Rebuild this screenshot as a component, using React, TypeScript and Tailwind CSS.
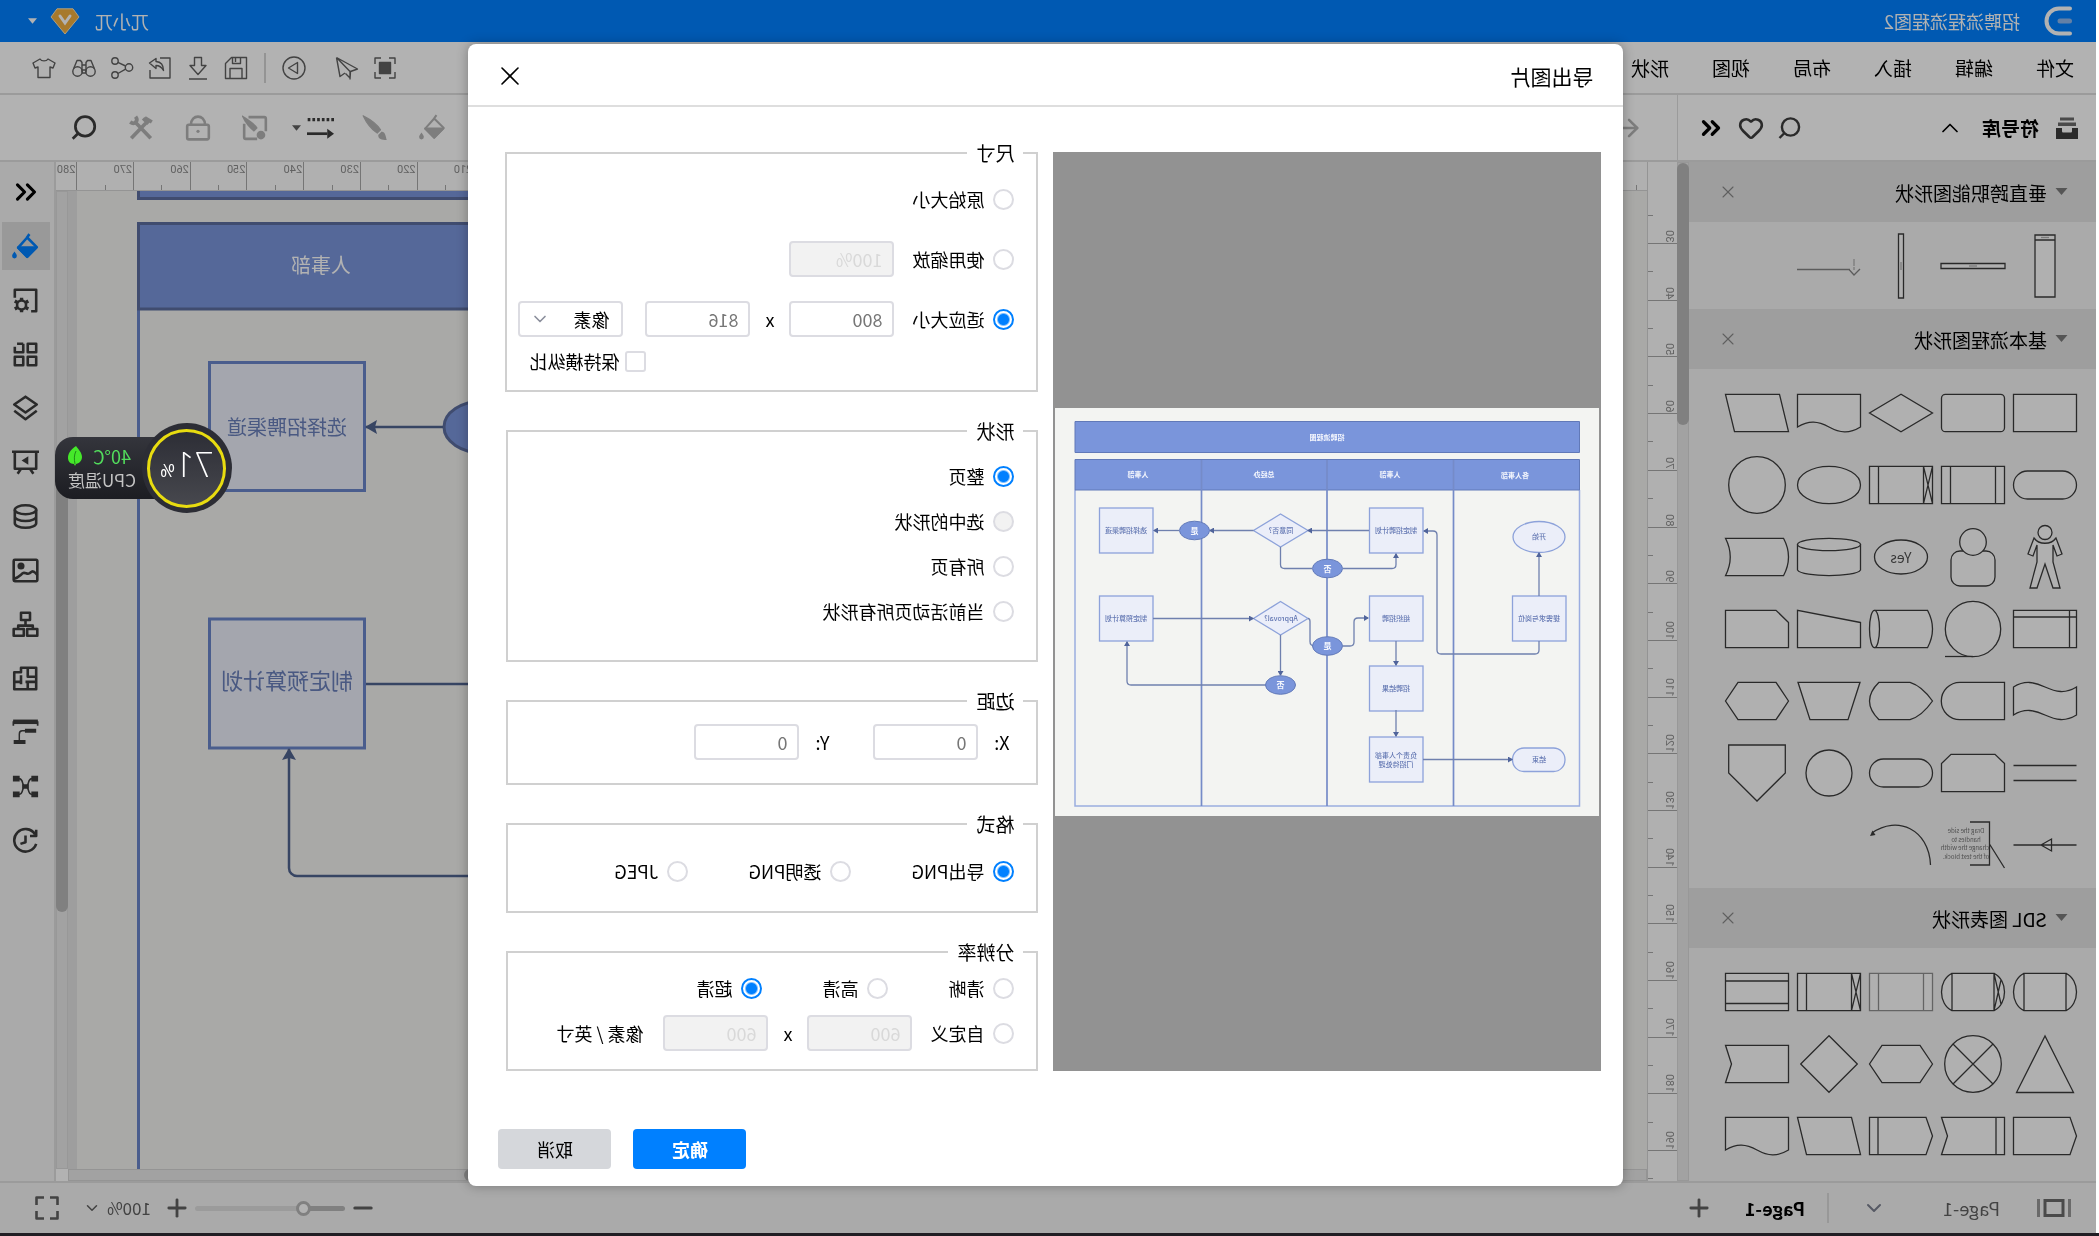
import React from "react";
import type { ReactNode } from "react";
import { ArrowLeft, ChevronDown, ChevronUp, ChevronsLeft, Heart, Minus, Plus, X } from "lucide-react";

/* ---------- Icons ---------- */

interface IconProps {
  children: ReactNode;
  className?: string;
  width?: number;
}

function Icon({ children, className = "size-6", width = 1.4 }: IconProps) {
  return (
    <svg viewBox="0 0 24 24" className={className} fill="none" stroke="currentColor" strokeWidth={width} strokeLinejoin="round" aria-hidden="true">
      {children}
    </svg>
  );
}

const searchPath = (
  <>
    <circle cx="11.5" cy="11" r="8.6" />
    <path d="M18 17.5l4.5 4.5" />
  </>
);

const bucketPath = (
  <>
    <path d="M8.500 1L11 4.500M10.500 4l-8.500 8.500 8.500 8.500 8-8z" />
    <path d="M2.500 13h16l-8 8.200z" fill="currentColor" />
    <path d="M21.800 16.500c1.400 2 2.100 2.900 2.100 4a2.100 2.100 0 0 1-4.200 0c0-1.100.7-2 2.100-4z" fill="currentColor" stroke="none" />
  </>
);

const menuIcons: { label: string; gap: string; icon: ReactNode }[] = [
  {
    label: "聚焦",
    gap: "mr-[14px]",
    icon: (
      <>
        <rect x="6.5" y="6.5" width="11" height="11" fill="currentColor" />
        <path d="M2 8V2h6M16 2h6v6M22 16v6h-6M8 22H2v-6" />
      </>
    ),
  },
  { label: "发送", gap: "mr-[29px]", icon: <path d="M22.5 1.5L1.500 13l7 2.500.500 7.500M22.5 1.5L19 20.500l-5-3.500M9 23.500V15.500L22.500 1.500M9 22l4.500-4.500" /> },
  {
    label: "播放",
    gap: "mr-4",
    icon: (
      <>
        <circle cx="12" cy="12" r="11" />
        <path d="M8.5 6.5L17.5 12l-9 5.5z" />
      </>
    ),
  },
  { label: "sep", gap: "mr-4", icon: null },
  { label: "保存", gap: "mr-[14px]", icon: <path d="M1.5 1.5h15l6 6v15h-21zM6 22.5v-10h12v10M7.5 1.5v6h8v-6M12.5 2v4" /> },
  { label: "下载", gap: "mr-[14px]", icon: <path d="M8.5 1.5h7v8H20l-8 9-8-9h4.500zM3 23h18" /> },
  { label: "导出", gap: "mr-[14px]", icon: <path d="M12 2H2v20h20v-8M22.500 7L16 2.500V5.500c-6 .5-7.500 4-7.500 9 2-3.500 4-5 7.500-5v3z" /> },
  {
    label: "分享",
    gap: "mr-[14px]",
    icon: (
      <>
        <circle cx="5" cy="11.500" r="3.700" />
        <circle cx="19" cy="5" r="3.200" />
        <circle cx="19" cy="19" r="3.200" />
        <path d="M8.400 10l7.700-3.600M8.400 13.200l7.700 4.300" />
      </>
    ),
  },
  {
    label: "查找",
    gap: "mr-4",
    icon: (
      <>
        <circle cx="5.500" cy="15.500" r="4.700" />
        <circle cx="18.500" cy="15.500" r="4.700" />
        <path d="M1.500 13L5 4.500h3.500L10 6.500v10M22.500 13L19 4.500h-3.500L14 6.500v10M10 9h4M10 14h4M10 17h4" />
      </>
    ),
  },
  { label: "主题", gap: "", icon: <path d="M8 3L1 7l2 5 3-1v10.500h12V11l3 1 2-5-7-4c-1.500 2.500-6.500 2.500-8 0z" /> },
];

const sideIcons: { label: string; icon: ReactNode }[] = [
  { label: "填充", icon: bucketPath },
  {
    label: "页面设置",
    icon: (
      <>
        <path d="M7 21.500H2.500v-19h19v7" />
        <circle cx="15.500" cy="16" r="4" />
        <path d="M15.500 9.500v2.500M15.500 20v2.500M9.500 12.500l2.300 1.300M19.200 18.200l2.300 1.300M9.500 19.500l2.300-1.300M19.200 13.800l2.300-1.300" strokeWidth="3" />
      </>
    ),
  },
  { label: "网格", icon: <path d="M2.500 2.500H10V10H2.500zM14 2.500h5.500M21.500 5v5H14V2.500M2.500 14H10v7.500H2.500zM14 14h7.500v7.500H14z" /> },
  { label: "图层", icon: <path d="M12 1.500l10 7-10 7-10-7zM2 14l10 7.500L22 14" /> },
  {
    label: "演示",
    icon: (
      <>
        <path d="M0 2.500h24M2.500 2.500v15h19v-15M8 17.500L5 22M16 17.500l3 4.500" />
        <path d="M9.500 6.500v7.500l6-3.700z" fill="currentColor" stroke="none" />
      </>
    ),
  },
  {
    label: "数据",
    icon: (
      <>
        <ellipse cx="12" cy="6" rx="9.500" ry="4" />
        <path d="M2.500 6v12c0 2 4 4 9.500 4s9.500-2 9.500-4V6M2.500 12c0 2 4 4 9.500 4s9.500-2 9.500-4" />
      </>
    ),
  },
  {
    label: "图片",
    icon: (
      <>
        <rect x="1.500" y="2.500" width="21" height="19" rx="1" />
        <circle cx="16" cy="8" r="2" fill="currentColor" />
        <path d="M1.500 16c4-5 5-3 7-1.500s4-1.500 6 0 4 4 8 5" />
      </>
    ),
  },
  { label: "组织结构", icon: <path d="M8 1.500h8v6.500H8zM12 8v5M5.500 15.500V13h13v2.500M1.500 16h9v6h-9zM13.500 16h9v6h-9z" /> },
  { label: "平面图", icon: <path d="M2.500 2.500H16v4h6v15H2.500zM10 2.500v8H2.500M2.500 15H10v6M16 9v6h6M10 15h2M16 15v2" /> },
  {
    label: "时间线",
    icon: (
      <>
        <path d="M1 2.500h22" strokeWidth="4" />
        <path d="M1.200 2v4M22.800 2v4" strokeWidth="1.500" />
        <path d="M2.500 10.500h10M12 20.500h10.500" strokeWidth="3.500" />
        <path d="M12 10.500h3c2 0 2.500 1 2.500 3v6" strokeWidth="1.300" />
      </>
    ),
  },
  {
    label: "思维导图",
    icon: (
      <>
        <path d="M.8 5h6M17.200 5h6M.8 19h6M17.200 19h6" strokeWidth="5" />
        <path d="M9 12h6" strokeWidth="4" />
        <path d="M6 5c5 0 2 7 6 7s1-7 6-7M6 19c5 0 2-7 6-7s1 7 6 7" strokeWidth="1.400" />
      </>
    ),
  },
  {
    label: "历史",
    icon: (
      <>
        <path d="M3.500 6.500A10 10 0 1 1 2.500 15M2.500 2.500v5.500H8" />
        <path d="M12 7.500v6l4.500 1.500" />
      </>
    ),
  },
];

/* ---------- Symbol library ---------- */

const docPath = "M-31.500-18.700H31.500V14C20 7 11 8 0 14S-20 21-31.500 14Z";
const parallelogram = "M-22.500-18.700H31.500L22.500 18.700H-31.500Z";
const box = "M-31.500-18.700H31.500V18.700H-31.500Z";
const hexagon = "M-31.500 0L-19-18.700H19L31.500 0 19 18.700H-19Z";
const stadium = "M-17.500-14h35a14 14 0 0 1 0 28h-35a14 14 0 0 1 0-28Z";
const crossBox = box + "M-22.500-18.700V18.700M22.500-18.700V18.700M-31.500-18.700L-22.500 18.700M-22.500-18.700L-31.500 18.700";
const capsule = "M-21-18.700H21V18.700H-21ZM-21-18.700C-35-12-35 12-21 18.700M21-18.700C35-12 35 12 21 18.700";

function Shape({ children, muted }: { children: ReactNode; muted?: boolean }) {
  return (
    <svg viewBox="-36 -36 72 72" className={muted ? "size-[72px] text-[#909090]" : "size-[72px] text-[#3c3c3c]"} fill="#fdfdfd" stroke="currentColor" strokeWidth="1.300">
      {children}
    </svg>
  );
}

const laneShapes = [
  <g key="a">
    <path d="M-10-31H10V31H-10ZM-10-26H10" />
    <path d="M-4-28.500H4" opacity=".4" />
  </g>,
  <g key="b">
    <path d="M-32-2.500H32V2.500H-32Z" />
    <path d="M-4 0H4" opacity=".4" />
  </g>,
  <g key="c">
    <path d="M-2.500-32H2.500V32H-2.500Z" />
    <path d="M0-4V4" opacity=".4" />
  </g>,
  <g key="d" fill="none" opacity=".6">
    <path d="M-21 3.500H32M-31 3L-25 9-20 3.500" />
    <path d="M-25-7V4" strokeDasharray="7 1" strokeWidth="2" opacity=".4" />
  </g>,
];

const basicShapes = [
  <path key="1" d={box} />,
  <rect key="2" x="-31.500" y="-18.700" width="63" height="37.400" rx="4" />,
  <path key="3" d="M0-18.700L31.500 0 0 18.700-31.500 0Z" />,
  <path key="4" d={docPath} />,
  <path key="5" d={parallelogram} />,
  <path key="6" d={stadium} />,
  <path key="7" d={box + "M-22.500-18.700V18.700M22.500-18.700V18.700"} />,
  <path key="8" d={crossBox} />,
  <ellipse key="9" rx="31.500" ry="18.700" />,
  <circle key="10" r="28.300" />,
  <g key="11">
    <path d="M-11-19C-6-12 6-12 11-19L17-3 12-1 8-12V5L15 31H8L0 7-8 31H-15L-8 5V-12L-12-1-17-3Z" />
    <circle cy="-24.500" r="7" />
  </g>,
  <g key="12">
    <rect x="-22" y="-6" width="44" height="35" rx="9" />
    <circle cy="-15" r="13.300" />
  </g>,
  <g key="13">
    <ellipse rx="26.500" ry="17" />
    <text y="6" textAnchor="middle" fontSize="14" fill="#505050" stroke="none">Yes</text>
  </g>,
  <g key="14">
    <path d="M-31.500-13V13C-27 20.500 27 20.500 31.500 13V-13" />
    <ellipse cy="-12.500" rx="31.500" ry="6.200" />
  </g>,
  <path key="15" d="M-26.500-18.700H31.500Q22 0 31.500 18.700H-26.500Q-36.500 0-26.500-18.700Z" />,
  <path key="16" d={box + "M-24.500-18.700V18.700M-31.500-12H31.500"} />,
  <g key="17">
    <circle r="27.700" />
    <path d="M0 27.500H28" />
  </g>,
  <g key="18">
    <path d="M26.500-18.700H-26.500Q-36.500 0-26.500 18.700H26.500" />
    <ellipse cx="26.500" rx="5" ry="18.700" />
  </g>,
  <path key="19" d="M-31.500-6.500L31.500-18.700V18.700H-31.500Z" />,
  <path key="20" d="M-31.500-6.500L-19-18.700H31.500V18.700H-31.500Z" />,
  <path key="21" d="M-31.500-14C-20-7-11-9 0-14S20-21 31.500-14V14C20 7 11 9 0 14S-20 21-31.500 14Z" />,
  <path key="22" d="M-31.500-18.700H13A18.700 18.700 0 0 1 13 18.700H-31.500Z" />,
  <path key="23" d="M-31.500 0Q-21-15-9-18.700H22Q41 0 22 18.700H-9Q-21 15-31.500 0Z" />,
  <path key="24" d="M-31-18.700H31L19 18.700H-19Z" />,
  <path key="25" d={hexagon} />,
  <path key="26" d="M-31.500-7.500H31.500M-31.500 7.500H31.500" />,
  <path key="27" d="M-31.500-9.500L-22-18.700H22L31.500-9.500V18.700H-31.500Z" />,
  <path key="28" d={stadium} />,
  <circle key="29" r="23" />,
  <path key="30" d="M-28.300-28H28.300V0L0 28-28.300 0Z" />,
  <path key="31" d="M-31.500 0H31.500M-6.500-6V6L4 0Z" />,
  <g key="32">
    <path d="M3-23H-16.500V20H3M-16.500-1L-31.500 23" fill="none" />
    <g fontSize="6" textAnchor="middle" fill="#707070" stroke="none">
      <text x="7" y="-12">Drag the side</text>
      <text x="7" y="-3">handles to</text>
      <text x="8" y="5">change the width</text>
      <text x="7" y="14">of the text block.</text>
    </g>
  </g>,
  <g key="33">
    <path d="M-29.500 20C-28-16 4-30 29-12" fill="none" />
    <path d="M31-9l-5.500-1L28.500-14.500z" fill="currentColor" stroke="none" />
  </g>,
];

const sdlShapes = [
  <path key="1" d={capsule} />,
  <path key="2" d={capsule + "M-28-12L-21 18.700M-28 12L-21-18.700"} />,
  <path key="3" d={box + "M-22.500-18.700V18.700M22.500-18.700V18.700"} />,
  <path key="4" d={crossBox} />,
  <path key="5" d={box + "M-31.500-11H31.500M-31.500 11.500H31.500"} />,
  <path key="6" d="M0-28L28.500 28.500H-28.500Z" />,
  <g key="7">
    <circle r="28.300" />
    <path d="M-20-20L20 20M20-20L-20 20" />
  </g>,
  <path key="8" d={hexagon} />,
  <path key="9" d="M0-28.300L28.300 0 0 28.300-28.300 0Z" />,
  <path key="10" d="M-31.500-18.700H31.500L25.500 0 31.500 18.700H-31.500Z" />,
  <path key="11" d="M-31.500 0L-25-18.700H31.500V18.700H-25Z" />,
  <path key="12" d="M-31.500-18.700H31.500L25.500 0 31.500 18.700H-31.500ZM-23-18.700V18.700" />,
  <path key="13" d="M-31.500 0L-25-18.700H31.500V18.700H-25ZM23-18.700V18.700" />,
  <path key="14" d={parallelogram} />,
  <path key="15" d={docPath} />,
];

function ShapeSection({ title, shapes }: { title: string; shapes: ReactNode[] }) {
  return (
    <section>
      <div className="flex h-[60px] items-center bg-[#e3e3e3] pr-[29px] pl-7">
        <svg viewBox="0 0 12 8" className="mr-2 h-2 w-[13px] fill-[#7a7a7a]" aria-hidden="true">
          <path d="M0 0h12L6 7z" />
        </svg>
        <h3 className="flex-1 pt-[2px] text-[19px] leading-6">{title}</h3>
        <button aria-label={"关闭" + title}>
          <X className="size-5 text-[#888]" strokeWidth={1.3} />
        </button>
      </div>
      <div className="flex flex-wrap pt-2 pr-[32px] pb-[7px] pl-[15px]">
        {shapes.map((shape, i) => (
          <Shape key={i} muted={title === "SDL 图表形状" && i === 2}>{shape}</Shape>
        ))}
      </div>
    </section>
  );
}

/* ---------- Rulers ---------- */

function HorizontalRuler() {
  const marks = Array.from({ length: 56 }, (_, i) => 5 + i * 5);
  return (
    <svg className="h-[29px] w-full border-b border-[#d4d4d4] bg-[#fcfcfc] font-[Roboto,sans-serif] text-[#a8a8a8]" aria-hidden="true">
      {marks.map((v) => (
        <g key={v}>
          <path d={`M${Math.round(v * 5.67 - 18) + 0.5} ${v % 10 ? 23 : 0}V29`} stroke="currentColor" />
          {v % 10 === 0 && (
            <text x={v * 5.67 - 16} y="11" fontSize="11" fill="#8c8c8c">{v}</text>
          )}
        </g>
      ))}
    </svg>
  );
}

function VerticalRuler() {
  const marks = Array.from({ length: 35 }, (_, i) => 25 + i * 5);
  return (
    <svg className="h-full w-[30px] shrink-0 border-r border-[#d4d4d4] bg-[#fcfcfc] font-[Roboto,sans-serif] text-[#a8a8a8]" aria-hidden="true">
      {marks.map((v) => {
        const y = Math.round(v * 5.669 - 89) + 0.5;
        return (
          <g key={v}>
            <path d={`M${v % 10 ? 24 : 0} ${y}H30`} stroke="currentColor" />
            {v % 10 === 0 && (
              <text transform={`translate(11 ${y - 1}) rotate(-90)`} fontSize="11" fill="#8c8c8c">{v}</text>
            )}
          </g>
        );
      })}
    </svg>
  );
}

/* ---------- Drawing on the page ---------- */

function CanvasDrawing() {
  return (
    <svg viewBox="-9 0 460 978" className="absolute top-0 right-0 h-[978px] w-[460px]" fill="none">
      <defs>
        <marker id="head" viewBox="0 0 12 14" refX="11" refY="7" markerWidth="12" markerHeight="14" markerUnits="userSpaceOnUse" orient="auto-start-reverse">
          <path d="M0 0L12 7 0 14 2 7z" fill="#50638f" />
        </marker>
      </defs>
      <g stroke="#5b719f" strokeWidth="3">
        <path d="M-20-5H389.500V7.500H-20z" fill="#7a95db" stroke="#5c6ea0" />
        <path d="M389.500 119V990" stroke="#6a86cb" />
        <path d="M-20 32.500H389.500V118H-20z" fill="#7a95db" stroke="#5c6ea0" />
        <path d="M163.500 171.500h155v128h-155zM163.500 428h155v129h-155z" fill="#ebeef9" stroke="#6a86cb" />
        <ellipse cx="45" cy="236" rx="39" ry="26" fill="#7a95db" stroke="#5c6ea0" />
      </g>
      <g stroke="#50638f" strokeWidth="2.500">
        <path d="M85 236H162" markerEnd="url(#head)" />
        <path d="M-9 493H162" />
        <path d="M-9 685H231a8 8 0 0 0 8-8V558" markerEnd="url(#head)" />
      </g>
      <g textAnchor="middle" fontSize="20">
        <text x="207" y="82" fill="#fff">人事部</text>
        <text x="241" y="244" fill="#6a80bb">选择招聘渠道</text>
        <text x="241" y="498" fontSize="22" fill="#6a80bb">制定预算计划</text>
      </g>
    </svg>
  );
}

/* ---------- Export preview ---------- */

function PreviewDrawing() {
  const boxes = [
    [176, 100], [446, 100], [176, 188], [446, 188], [33, 188], [176, 258], [176, 329],
  ];
  const lines = [
    "M230 122.500H291", "M345.500 122.500H389", "M420 122.500H445", "M256 160.500H207q-4 0-4-4V146",
    "M60 233v9q0 4 4 4h94q4 0 4-4V127q0-4 4-4H175", "M60 188V145", "M446 210.500H346", "M203 233V257",
    "M203 302V328", "M176 351.500H87", "M256 238h-7q-4 0-4-4v-20q0-4-4-4H231", "M318.500 227V267",
    "M333 277H468q4 0 4-4V234",
  ];
  const ovals: [number, number, string][] = [
    [404.5, 122.5, "是"], [271.5, 160.5, "否"], [271.5, 238, "是"], [318.5, 277, "否"],
  ];
  const labels: [number, number, string][] = [
    [60, 131, "开始"], [203, 125, "制定招聘计划"], [318, 125, "同意否?"], [473, 125, "选择招聘渠道"],
    [60, 213, "提需求与岗位"], [203, 213, "组织招聘"], [318, 213, "Approval?"], [473, 213, "制定预算计划"],
    [203, 283, "招聘结果"], [203, 350, "负责个人事部"], [203, 359, "门招待处理"], [60, 354, "结束"],
  ];
  return (
    <svg viewBox="0 0 544 408" className="w-full bg-[#f3f4f2]" fill="none">
      <defs>
        <marker id="tip" viewBox="0 0 5 6" refX="4" refY="3" markerWidth="5" markerHeight="6" markerUnits="userSpaceOnUse" orient="auto">
          <path d="M0 0L5 3 0 6z" fill="#50649b" />
        </marker>
      </defs>
      <g className="blur-[0.5px]">
        <path d="M19.500 82V398H524V82" stroke="#9bade0" strokeWidth="1.500" />
        <path d="M19.500 13.500H524V44.500H19.500zM19.500 51.500H524V82H19.500z" fill="#7a95db" stroke="#6179b8" />
        <path d="M145.500 52V398M272 52V398M397.500 52V398" stroke="#758bc8" strokeWidth="1.700" />
        <g fill="#ebeef9" stroke="#8da2da" strokeWidth="1.300">
          {boxes.map(([x, y]) => (
            <rect key={`${x}-${y}`} x={x} y={y} width="53.500" height="45" />
          ))}
          <path d="M318.500 106L345.500 122.500 318.500 139 291 122.500zM318.500 193.500L345.500 210.500 318.500 227 291 210.500z" />
          <ellipse cx="60" cy="129" rx="26" ry="15.500" />
          <rect x="34" y="340" width="52.500" height="23.500" rx="11.500" />
        </g>
        <g stroke="#6f80ae" strokeWidth="1.300">
          <path d="M318.500 139v17.500q0 4-4 4H287M291 210.500q-2 0-2 3v20q0 4-4 4.500" />
          {lines.map((d) => (
            <path key={d} d={d} markerEnd="url(#tip)" />
          ))}
        </g>
        {ovals.map(([x, y, t]) => (
          <g key={`${x}-${y}`}>
            <ellipse cx={x} cy={y} rx="15" ry="9.300" fill="#7a95db" stroke="#6179b8" />
            <text x={x} y={y + 3} textAnchor="middle" fontSize="8" fontWeight="700" fill="#f4f6fd">{t}</text>
          </g>
        ))}
        <g textAnchor="middle" fontSize="7" fontWeight="500" fill="#6377b3">
          {labels.map(([x, y, t]) => (
            <text key={`${x}-${y}`} x={x} y={y}>{t}</text>
          ))}
        </g>
        <g textAnchor="middle" fontSize="7" fontWeight="700" fill="#f4f6fd">
          <text x="272" y="32">招聘流程图</text>
          <text x="84" y="70">各人事部</text>
          <text x="209" y="69">人事部</text>
          <text x="335" y="69">总经办</text>
          <text x="461" y="69">人事部</text>
        </g>
      </g>
    </svg>
  );
}

/* ---------- Form parts ---------- */

interface RadioProps {
  name: string;
  label: string;
  checked?: boolean;
  disabled?: boolean;
}

function Radio({ name, label, checked, disabled }: RadioProps) {
  return (
    <label className="flex items-center gap-[9px] text-[18px] leading-6">
      <input
        type="radio"
        name={name}
        defaultChecked={checked}
        disabled={disabled}
        className="size-[21px] shrink-0 appearance-none rounded-full border-2 border-[#dcdce2] bg-white checked:border-[#0080ff] checked:bg-[radial-gradient(circle,#0080ff_5px,#ffffff_7px)] disabled:bg-[#f2f2f2]"
      />
      {label}
    </label>
  );
}

function NumberBox({ label, value, disabled }: { label: string; value: string; disabled?: boolean }) {
  return (
    <input
      type="text"
      aria-label={label}
      defaultValue={value}
      disabled={disabled}
      className="h-9 w-[105px] rounded border-2 border-[#dcdce2] bg-white px-[10px] text-[18px] leading-6 text-[#777] disabled:bg-[#f2f2f2] disabled:text-[#d9d9d9]"
    />
  );
}

function Group({ title, className, children }: { title: string; className: string; children: ReactNode }) {
  return (
    <fieldset className={`border-2 border-[#d0d0d0] px-[22px] ${className}`}>
      <legend className="-ml-[9px] h-0 px-[9px] text-[19px] leading-[0px]">{title}</legend>
      {children}
    </fieldset>
  );
}

function ExportDialog() {
  return (
    <div role="dialog" aria-label="导出图片" className="w-[1155px] max-w-full rounded-lg bg-white shadow-[0_0_12px_rgba(0,0,0,0.3)]">
      <header className="flex h-[63px] items-center justify-between border-b-2 border-[#dedede] pt-[2px] pr-[26px] pl-[30px]">
        <h2 className="text-[21px] leading-7">导出图片</h2>
        <button aria-label="关闭">
          <X className="size-8 text-black" strokeWidth={1.2} />
        </button>
      </header>
      <div className="flex gap-[15px] pt-[45px] pr-[38px] pl-[22px]">
        <div className="flex flex-1 items-center bg-[#929292] px-[2px]">
          <PreviewDrawing />
        </div>
        <form className="flex w-[532px] flex-col gap-[38px]">
          <Group title="尺寸" className="h-[240px]">
            <div className="flex h-[60px] items-center pt-[30px]">
              <Radio name="size" label="原始大小" />
            </div>
            <div className="flex h-[75px] items-center gap-[18px] pt-[15px]">
              <Radio name="size" label="使用缩放" />
              <NumberBox label="缩放" value="100%" disabled />
            </div>
            <div className="flex h-[60px] items-center">
              <Radio name="size" label="适应大小" checked />
              <span className="w-[18px]" />
              <NumberBox label="宽" value="800" />
              <span className="w-[39px] text-center text-[18px]">x</span>
              <NumberBox label="高" value="816" />
              <span className="relative -mr-3 ml-[22px]">
                <select aria-label="单位" className="h-9 w-[105px] appearance-none rounded border-2 border-[#dcdce2] bg-white pl-[12px] text-[18px] leading-6">
                  <option>像素</option>
                </select>
                <ChevronDown className="pointer-events-none absolute top-2 right-3 size-5 text-[#8b8f9c]" />
              </span>
            </div>
            <label className="ml-[368px] flex items-center gap-[6px] text-[18px] leading-6 whitespace-nowrap">
              <input type="checkbox" className="size-[21px] shrink-0 appearance-none rounded-[3px] border-2 border-[#dcdce2]" />
              保持横纵比
            </label>
          </Group>
          <Group title="形状" className="h-[232px]">
            <div className="flex flex-col gap-[21px] pt-8">
              <Radio name="shape" label="整页" checked />
              <Radio name="shape" label="选中的形状" disabled />
              <Radio name="shape" label="所有页" />
              <Radio name="shape" label="当前活动页所有形状" />
            </div>
          </Group>
          <Group title="边距" className="h-[85px]">
            <div className="flex items-center pt-[22px] pl-[5px] text-[18px] leading-6">
              <span className="w-[31px]">X:</span>
              <NumberBox label="X" value="0" />
              <span className="ml-[44px] w-[30px]">Y:</span>
              <NumberBox label="Y" value="0" />
            </div>
          </Group>
          <Group title="格式" className="h-[90px]">
            <div className="grid grid-cols-[163px_163px_1fr] pt-[34px]">
              <Radio name="format" label="导出PNG" checked />
              <Radio name="format" label="透明PNG" />
              <Radio name="format" label="JPEG" />
            </div>
          </Group>
          <Group title="分辨率" className="h-[120px]">
            <div className="grid grid-cols-[126px_126px_1fr] pt-[23px]">
              <Radio name="dpi" label="清晰" />
              <Radio name="dpi" label="高清" />
              <Radio name="dpi" label="超清" checked />
            </div>
            <div className="flex items-center pt-[15px]">
              <Radio name="dpi" label="自定义" />
              <span className="w-[18px]" />
              <NumberBox label="横向分辨率" value="600" disabled />
              <span className="w-[39px] text-center text-[18px]">x</span>
              <NumberBox label="纵向分辨率" value="600" disabled />
              <span className="ml-5 text-[18px] leading-6">像素 / 英寸</span>
            </div>
          </Group>
        </form>
      </div>
      <footer className="flex justify-end gap-[22px] pt-[58px] pr-[30px] pb-[17px] text-[18px] leading-6">
        <button className="h-10 w-[113px] rounded bg-[#0080ff] font-bold text-white">确定</button>
        <button className="h-10 w-[113px] rounded bg-[#d5d7db]">取消</button>
      </footer>
    </div>
  );
}

/* ---------- Floating temperature widget ---------- */

function TempWidget() {
  return (
    <div className="absolute top-[423px] right-[55px] flex items-center">
      <div className="z-10 flex size-[90px] items-center justify-center rounded-full bg-[#2c2d35]">
        <div className="flex size-[79px] items-baseline justify-center rounded-full border-[3px] border-[#e8dc10] bg-linear-to-b from-[#2d2e36] to-[#47484e] pt-3 font-['Open_Sans',sans-serif] text-white">
          <span className="text-[34px] leading-10 font-light">71</span>
          <span className="text-[18px] leading-10">%</span>
        </div>
      </div>
      <div className="-ml-10 flex h-[62px] flex-col justify-center rounded-r-[18px] bg-linear-to-b from-[#34353c] to-[#1c1d22] pr-[13px] pl-[46px] text-[#c4c4c4]">
        <div className="flex items-center justify-between pl-[5px] text-[18px] leading-6 text-[#52dc5c]">
          40℃
          <svg viewBox="0 0 14 20" className="h-5 w-[14px] fill-[#45e82a]" aria-hidden="true">
            <path d="M6 0c6 4 8 8 8 12 0 3-2 6-6 6l-1 2-1-2C2 17 0 14 0 11c0-4 3-7 6-11z" />
            <path d="M7 18C8 13 8 9 6 5" fill="none" stroke="#1e8a16" />
          </svg>
        </div>
        <span className="text-[17px] leading-6">CPU温度</span>
      </div>
    </div>
  );
}

/* ---------- Page ---------- */

export default function App() {
  return (
    <div className="flex h-screen -scale-x-100 flex-col overflow-hidden bg-white font-['Noto_Sans_CJK_SC',sans-serif] text-black">
      <div className="relative ml-[3px] flex min-h-0 flex-1 flex-col">
        {/* Title bar */}
        <header className="flex h-[42px] shrink-0 items-center bg-[#0080ff] pr-[28px] pl-6 text-[18px] leading-6 text-white">
          <svg viewBox="0 0 28 30" className="mr-[24px] h-[30px] w-7" fill="none" strokeLinecap="round" aria-hidden="true">
            <path d="M2 2.500h11a12.500 12.500 0 0 0 0 0" stroke="none" />
            <path d="M2 2.500h11a12.500 12.500 0 0 1 0 25H2" stroke="#fff" strokeWidth="4" />
            <path d="M2.500 15H12" stroke="#8fb8ee" strokeWidth="5" />
          </svg>
          <h1 className="flex-1">招聘流程流程图2</h1>
          <span>兀小兀</span>
          <svg viewBox="0 0 30 27" className="mr-[13px] ml-[15px] h-[27px] w-[30px]" fill="none" aria-hidden="true">
            <path d="M7 .8h16L29 9 15 26 1 9z" fill="#f0ae3e" stroke="#f8e3b8" />
            <path d="M10 8l5 7 5-7" stroke="#fff" strokeWidth="3" strokeLinecap="round" />
          </svg>
          <svg viewBox="0 0 10 6" className="h-[6px] w-[9px] fill-white" aria-hidden="true">
            <path d="M0 0h10L5 6z" />
          </svg>
        </header>

        {/* Menu bar */}
        <nav className="flex h-[53px] shrink-0 items-center border-b-2 border-[#dedede] bg-white pr-8 pl-[22px]">
          <div className="flex flex-1 gap-[43px] text-[19px] leading-6">
            {["文件", "编辑", "插入", "布局", "视图", "形状"].map((item) => (
              <button key={item}>{item}</button>
            ))}
          </div>
          <div className="flex items-center text-[#606060]">
            {menuIcons.map(({ label, gap, icon }) =>
              label === "sep" ? (
                <span key={label} className={`h-[30px] w-[2px] bg-[#d4d4d4] ${gap}`} />
              ) : (
                <button key={label} aria-label={label} className={gap}>
                  <Icon>{icon}</Icon>
                </button>
              )
            )}
          </div>
        </nav>

        {/* Tool bar */}
        <div className="flex h-[67px] shrink-0 border-b-2 border-[#dedede] bg-white">
          <div className="flex w-[419px] items-center border-r border-[#dedede] pr-[18px] pl-[18px]">
            <svg viewBox="0 0 22 22" className="mr-[17px] size-[22px] fill-[#3d3d3d]" aria-hidden="true">
              <path d="M0 11h6v3c0 1 .5 1.500 1.500 1.500h7c1 0 1.500-.5 1.500-1.500v-3h6v11H0z" />
              <path d="M2 5.500h18V9H2zM4 .5h14V3.500H4z" fill="#6b6b6b" />
            </svg>
            <h2 className="mr-[18px] text-[19px] leading-6 font-bold">符号库</h2>
            <ChevronUp className="size-7" strokeWidth={1.5} />
            <button aria-label="搜索" className="mr-[14px] ml-auto text-[#3d3d3d]">
              <Icon className="size-6" width={2.4}>{searchPath}</Icon>
            </button>
            <button aria-label="收藏" className="mr-3 text-[#3d3d3d]">
              <Heart className="size-[26px]" strokeWidth={2.4} />
            </button>
            <button aria-label="收起">
              <ChevronsLeft className="size-[30px]" strokeWidth={2.6} />
            </button>
          </div>
          <div className="flex flex-1 items-center pr-[71px] pl-[34px] text-[#b4b4b4]">
            <ArrowLeft className="mr-auto size-7" strokeWidth={2.2} />
            <button aria-label="填充" className="mr-[30px]">
              <Icon className="size-[27px]" width={1.8}>{bucketPath}</Icon>
            </button>
            <button aria-label="画笔" className="mr-[28px]">
              <Icon className="size-[27px]" width={1}>
                <path d="M1 1.500C8 5 14 10 16.500 14l-3 3C9 14 4 8 1 1.500z" fill="currentColor" transform="matrix(-1 0 0 1 24 0)" />
                <path d="M6.500 15.500l3 3c.5 3-2 5-7.500 4.500 1-3 1-7 4.500-7.500z" fill="currentColor" stroke="none" />
              </Icon>
            </button>
            <button aria-label="线型" className="mr-[24px] flex items-center gap-[6px] text-[#3d3d3d]">
              <Icon className="size-[27px]" width={2.4}>
                <path d="M0 5h24" strokeDasharray="2.400 1.800" strokeWidth="3" />
                <path d="M24 17.500H6" />
                <path d="M0 17.500l6-4.500v9z" fill="currentColor" stroke="none" />
              </Icon>
              <svg viewBox="0 0 10 6" className="h-[6px] w-[9px] fill-[#606060]" aria-hidden="true">
                <path d="M0 0h10L5 6z" />
              </svg>
            </button>
            <button aria-label="样式" className="mr-[31px]">
              <Icon className="size-[26px]" width={2.4}>
                <path d="M18 2H3.500C2.500 2 2 2.500 2 3.500V15M10 22h10.500c1 0 1.500-.5 1.500-1.500V8" />
                <path d="M24.500 0C18 4 12 8 9.500 12l3.500 3.500C17 12 22 7 24.500 0z" fill="currentColor" stroke="none" />
                <circle cx="6.500" cy="18.500" r="4" fill="currentColor" stroke="none" />
              </Icon>
            </button>
            <button aria-label="锁定" className="mr-[31px]">
              <Icon className="size-[26px]" width={2.4}>
                <rect x="2" y="9" width="20" height="13.500" rx="1.500" />
                <path d="M5.500 9c0-10 13-10 13 0" />
                <circle cx="12" cy="15" r="1.500" fill="currentColor" stroke="none" />
              </Icon>
            </button>
            <button aria-label="工具" className="mr-[30px]">
              <Icon className="size-[26px]" width={3.4}>
                <path d="M3 21.500L17 7M21 21.500L7 7M2 6.500l6.500-4M5 8l5-5" />
                <path d="M17 1.500c-3 4 1 8 5 5" />
              </Icon>
            </button>
            <button aria-label="查找" className="text-[#3d3d3d]">
              <Icon className="size-[27px]" width={2.4}>{searchPath}</Icon>
            </button>
          </div>
        </div>

        {/* Work area */}
        <main className="flex min-h-0 flex-1">
          <aside className="flex w-[419px] shrink-0 bg-[#f4f4f4]">
            <div className="flex-1 overflow-hidden">
              <ShapeSection title="垂直跨职能图形状" shapes={laneShapes} />
              <ShapeSection title="基本流程图形状" shapes={basicShapes} />
              <ShapeSection title="SDL 图表形状" shapes={sdlShapes} />
            </div>
            <div className="w-3 border border-[#dadada] bg-[#e8e8e8]">
              <div className="-mx-px h-[262px] rounded-md bg-[#b8b8b8]" />
            </div>
          </aside>

          <VerticalRuler />
          <div className="flex min-w-0 flex-1 flex-col">
            <HorizontalRuler />
            <div className="flex min-h-0 flex-1">
              <div className="flex min-w-0 flex-1 flex-col">
                <div className="relative flex-1 overflow-hidden border-r-[9px] border-[#e3e3e3] bg-[#f3f3f0]">
                  <CanvasDrawing />
                </div>
                <div className="h-3 border border-[#d4d4d4] bg-[#e8e8e8] px-[26px]">
                  <div className="-mt-px mr-[369px] h-3 rounded-md bg-[#b8b8b8]" />
                </div>
              </div>
              <div className="mb-3 w-3 border border-[#dadada] bg-[#e8e8e8] pt-[270px]">
                <div className="-mx-px h-[450px] rounded-md bg-[#b8b8b8]" />
              </div>
            </div>
          </div>

          <aside className="flex w-14 shrink-0 flex-col gap-[6px] border-l-2 border-[#dedede] bg-[#f4f4f4] pt-[6px] pl-1 text-[#3d3d3d]">
            <button aria-label="收起" className="flex size-12 items-center justify-center text-black">
              <ChevronsLeft className="size-[34px]" strokeWidth={2.2} />
            </button>
            {sideIcons.map(({ label, icon }, i) => (
              <button key={label} aria-label={label} className={i === 0 ? "flex size-12 items-center justify-center bg-[#dbdbdb] text-[#0080ff]" : "flex size-12 items-center justify-center"}>
                <Icon className="size-[27px]" width={2.3}>{icon}</Icon>
              </button>
            ))}
          </aside>
        </main>

        {/* Status bar */}
        <footer className="flex h-[52px] shrink-0 items-center border-t-2 border-[#dedede] bg-[#f4f4f4] pr-[35px] pl-[25px] text-[18px] leading-6 text-[#606060]">
          <svg viewBox="0 0 34 18" className="mr-[37px] h-[18px] w-[34px]" fill="none" stroke="#6b6b6b" strokeWidth="3" aria-hidden="true">
            <path d="M8 1.500h18v15H8z" />
            <path d="M1.500 0v18M32.500 0v18" stroke="#999" />
          </svg>
          <span>Page-1</span>
          <ChevronDown className="mr-[33px] ml-[57px] size-6 text-[#7c8090]" />
          <span className="mr-[22px] h-[30px] w-[2px] bg-[#dadada]" />
          <span className="font-bold text-black">Page-1</span>
          <button aria-label="新建页" className="ml-8">
            <Plus className="size-7" strokeWidth={2.4} />
          </button>
          <button aria-label="缩小" className="ml-auto">
            <Minus className="size-7" strokeWidth={2.6} />
          </button>
          <input
            type="range"
            aria-label="缩放"
            defaultValue={25}
            className="mx-1 h-[5px] w-[150px] appearance-none rounded bg-[linear-gradient(to_right,#b8b8b8_26%,#dedede_26%)] [&::-webkit-slider-thumb]:size-[15px] [&::-webkit-slider-thumb]:appearance-none [&::-webkit-slider-thumb]:rounded-full [&::-webkit-slider-thumb]:border-[3px] [&::-webkit-slider-thumb]:border-[#b8b8b8] [&::-webkit-slider-thumb]:bg-white"
          />
          <button aria-label="放大">
            <Plus className="size-7" strokeWidth={2.4} />
          </button>
          <span className="ml-3 text-[17px]">100%</span>
          <ChevronDown className="mr-[24px] ml-[6px] size-[18px]" />
          <button aria-label="全屏">
            <Icon className="size-6" width={2.6}>
              <path d="M1.500 9V1.500H9M15 1.500h7.500V9M22.500 15v7.500H15M9 22.500H1.500V15" />
            </Icon>
          </button>
        </footer>

        {/* Dialog over the dimmed editor */}
        <div className="absolute inset-0 flex items-start justify-center bg-black/30 pt-11 pl-1">
          <ExportDialog />
        </div>
        <TempWidget />
      </div>
      <div className="h-[3px] shrink-0 bg-[#211e24]" />
    </div>
  );
}
